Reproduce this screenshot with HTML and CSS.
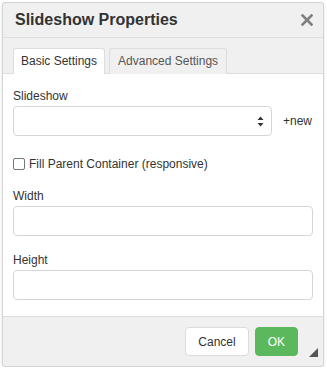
FILE: index.html
```html
<!DOCTYPE html>
<html>
<head>
<meta charset="utf-8">
<link rel="stylesheet" href="styles.css">
</head>
<body>
<div class="dialog">
  <div class="header">
    <span class="title">Slideshow Properties</span>
    <svg class="close" width="12" height="12" viewBox="0 0 12 12"><path d="M1.5 1.5 L10.5 10.5 M10.5 1.5 L1.5 10.5" stroke="#808080" stroke-width="2.6" stroke-linecap="square"/></svg>
  </div>
  <div class="tabs">
    <div class="tab active">Basic Settings</div>
    <div class="tab">Advanced Settings</div>
  </div>
  <div class="content">
    <label class="label">Slideshow</label>
    <div class="select-row">
      <div class="select">
        <svg class="arrows" width="7" height="11" viewBox="0 0 7 11"><path d="M3.5 0.5 L6.5 4 L0.5 4 Z M3.5 10.5 L6.5 7 L0.5 7 Z" fill="#333"/></svg>
      </div>
      <span class="new">+new</span>
    </div>
    <div class="check-row">
      <span class="checkbox"></span>
      <span>Fill Parent Container (responsive)</span>
    </div>
    <label class="label">Width</label>
    <div class="input"></div>
    <label class="label label-gap">Height</label>
    <div class="input"></div>
  </div>
  <div class="footer">
    <button class="btn">Cancel</button>
    <button class="btn btn-ok">OK</button>
    <span class="resize"></span>
  </div>
</div>
</body>
</html>
```

FILE: styles.css
```css
html, body {
  margin: 0;
  padding: 0;
  background: #ffffff;
}
body {
  font-family: "Liberation Sans", Arial, sans-serif;
  font-size: 12px;
  line-height: 18px;
  color: #333333;
}
.dialog {
  position: relative;
  margin: 2px 0 0 2px;
  width: 322px;
  height: 365px;
  border: 1px solid #d4d4d4;
  border-radius: 3px;
  box-shadow: 0 1px 3px rgba(0,0,0,0.12);
  background: #f0f0f0;
  display: flex;
  flex-direction: column;
  overflow: hidden;
  box-sizing: border-box;
}
.header {
  height: 35px;
  flex: none;
  box-sizing: border-box;
  border-bottom: 1px solid #dedede;
  display: flex;
  align-items: center;
  justify-content: space-between;
  padding: 0 10px 0 12px;
}
.title {
  font-weight: bold;
  font-size: 16px;
  color: #333;
}
.close {
  display: block;
  margin-top: -1px;
}
.tabs {
  flex: none;
  display: flex;
  gap: 4px;
  padding: 10px 0 0 10px;
  border-bottom: 1px solid #dddddd;
  height: 36px;
  box-sizing: border-box;
}
.tab {
  height: 26px;
  box-sizing: border-box;
  padding: 0 8px;
  line-height: 24px;
  border: 1px solid #dddddd;
  border-bottom: none;
  border-radius: 3px 3px 0 0;
  color: #555;
  background: #f0f0f0;
}
.tab.active {
  background: #ffffff;
  color: #333;
  padding: 0 7px 1px 7px;
  margin-bottom: -1px;
}
.content {
  flex: none;
  background: #ffffff;
  padding: 13px 10px 16px 10px;
  border-bottom: 1px solid #dddddd;
  display: flex;
  flex-direction: column;
}
.label {
  display: block;
  line-height: 18px;
  margin-bottom: 1px;
}
.label-gap {
  margin-top: 15px;
}
.select-row {
  display: flex;
  align-items: center;
  gap: 11px;
}
.select {
  width: 259px;
  height: 30px;
  box-sizing: border-box;
  border: 1px solid #d6d6d6;
  border-radius: 4px;
  background: #fff;
  display: flex;
  align-items: center;
  justify-content: flex-end;
  padding-right: 7px;
}
.arrows {
  display: block;
}
.new {
  font-size: 12px;
}
.check-row {
  display: flex;
  align-items: center;
  gap: 4px;
  margin: 19px 0 14px 0;
  height: 18px;
}
.checkbox {
  width: 12px;
  height: 12px;
  box-sizing: border-box;
  border: 1px solid #767676;
  border-radius: 2px;
  background: #fff;
  flex: none;
}
.input {
  height: 30px;
  box-sizing: border-box;
  border: 1px solid #d6d6d6;
  border-radius: 4px;
  background: #fff;
}
.footer {
  flex: 1;
  display: flex;
  justify-content: flex-end;
  align-items: flex-start;
  gap: 6px;
  padding: 10px 25px 0 0;
}
.btn {
  height: 29px;
  box-sizing: border-box;
  padding: 0 12px;
  border: 1px solid #dcdcdc;
  border-radius: 4px;
  background: #ffffff;
  font-family: "Liberation Sans", Arial, sans-serif;
  font-size: 12px;
  color: #333;
  margin: 0;
}
.btn-ok {
  background: #5cb85c;
  border-color: #5cb85c;
  color: #ffffff;
}
.resize {
  position: absolute;
  right: 5px;
  bottom: 9px;
  width: 0;
  height: 0;
  border-style: solid;
  border-width: 0 0 9px 9px;
  border-color: transparent transparent #555 transparent;
}
```
